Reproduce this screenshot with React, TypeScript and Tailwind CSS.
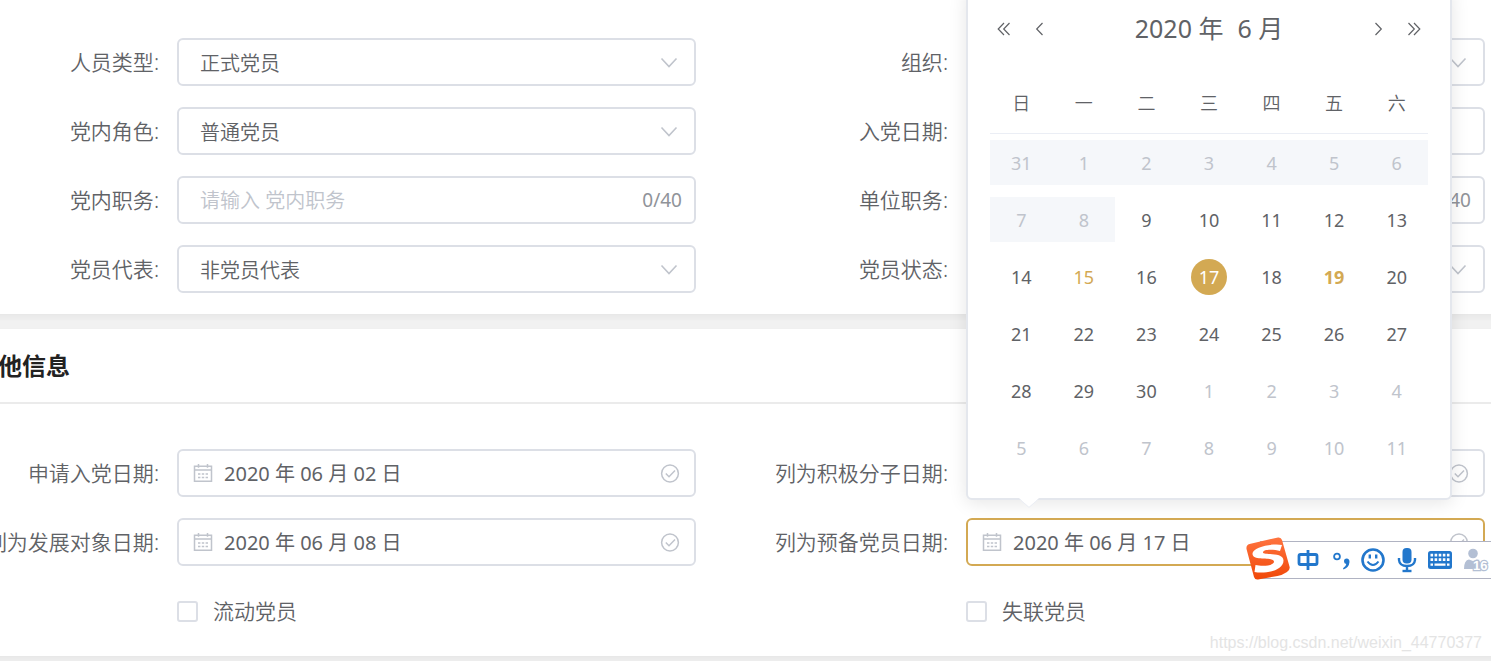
import { useState } from "react"

interface IField {
  id: string
  label: string
  type: 'select' | 'text' | 'date'
  value?: string
  placeholder?: string
  suffix?: 'count' | 'check'
  active?: boolean
}

const memberFields: IField[] = [
  { id: 'personType', label: '人员类型', type: 'select', value: '正式党员' },
  { id: 'organization', label: '组织', type: 'select', value: '' },
  { id: 'role', label: '党内角色', type: 'select', value: '普通党员' },
  { id: 'joinDate', label: '入党日期', type: 'date', value: '' },
  { id: 'partyDuty', label: '党内职务', type: 'text', placeholder: '请输入 党内职务', suffix: 'count' },
  { id: 'unitDuty', label: '单位职务', type: 'text', suffix: 'count' },
  { id: 'delegate', label: '党员代表', type: 'select', value: '非党员代表' },
  { id: 'status', label: '党员状态', type: 'select', value: '' },
]

const otherFields: IField[] = [
  { id: 'applyDate', label: '申请入党日期', type: 'date', value: '2020 年 06 月 02 日', suffix: 'check' },
  { id: 'activistDate', label: '列为积极分子日期', type: 'date', value: '', suffix: 'check' },
  { id: 'developDate', label: '列为发展对象日期', type: 'date', value: '2020 年 06 月 08 日', suffix: 'check' },
  { id: 'probationDate', label: '列为预备党员日期', type: 'date', value: '2020 年 06 月 17 日', suffix: 'check', active: true },
]

const weekDays = ['日', '一', '二', '三', '四', '五', '六']

const weeks = [
  [31, 1, 2, 3, 4, 5, 6],
  [7, 8, 9, 10, 11, 12, 13],
  [14, 15, 16, 17, 18, 19, 20],
  [21, 22, 23, 24, 25, 26, 27],
  [28, 29, 30, 1, 2, 3, 4],
  [5, 6, 7, 8, 9, 10, 11],
]

const ChevronDown = () => (
  <svg width="18" height="12" viewBox="0 0 18 12" fill="none" stroke="#c0c4cc" strokeWidth="1.6" className="pointer-events-none">
    <path d="M1.5 2.500 9 10.500 16.5 2.500" />
  </svg>
)

const CheckCircle = () => (
  <svg width="20" height="20" viewBox="0 0 20 20" fill="none" stroke="#c0c4cc" strokeWidth="1.5">
    <circle cx="10" cy="10.500" r="8.4" />
    <path d="M5.8 10.500 9 13.700 15 7.500" />
  </svg>
)

const CalendarIcon = () => (
  <svg width="20" height="20" viewBox="0 0 20 20" fill="none" stroke="#c0c4cc" strokeWidth="1.5">
    <path d="M1.5 3.2H18.5V18.2H1.5ZM1.5 7H18.5M5.5 1V4.8M14.5 1V4.8" />
    <path d="M5 11H7.4M8.8 11H11.2M12.6 11H15M5 14.500H7.4M8.8 14.500H11.2M12.6 14.500H15" />
  </svg>
)

function Arrow({ label, d }: { label: string, d: string }) {
  return (
    <button type="button" aria-label={label} className="flex items-center justify-center w-[18px] h-[18px]">
      <svg width="18" height="18" viewBox="0 0 18 18" fill="none" stroke="#606266" strokeWidth="1.2">
        <path d={d} />
      </svg>
    </button>
  )
}

function DayCell({ day, week }: { day: number, week: number }) {
  const disabled = week === 0 || (week === 1 && day < 9)
  const nextMonth = (week === 4 && day < 10) || week === 5
  let style = 'text-[#606266]'
  if (disabled) style = 'text-[#c0c4cc] bg-[#f5f7fa]'
  if (nextMonth) style = 'text-[#c0c4cc]'
  if (week === 2 && day === 15) style = 'text-[#d3a953]'
  if (week === 2 && day === 19) style = 'text-[#d3a953] font-bold'
  if (week === 2 && day === 17) style = 'text-white'
  return (
    <td className="p-0 py-[6px]">
      <button type="button" disabled={disabled} className={`flex items-center justify-center w-full h-[45px] ${style}`}>
        <span className={`flex items-center justify-center w-9 h-9 rounded-full ${style === 'text-white' ? 'bg-[#d3a953]' : ''}`}>{day}</span>
      </button>
    </td>
  )
}

function DatePanel() {
  return (
    <div className="absolute z-10 left-0 bottom-full mb-[18px] w-[486px] px-[22px] pt-[18px] pb-[22px] bg-white border-2 border-[#e4e7ed] rounded-md shadow-[0_3px_18px_rgba(0,0,0,0.1)] text-[#606266]">
      <div className="flex items-center h-[45px] mb-[22px] px-[5px]">
        <div className="flex gap-[18px]">
          <Arrow label="前一年" d="M9 3 3.2 9 9 15M14.5 3 8.7 9 14.5 15" />
          <Arrow label="上个月" d="M11.5 3 5.7 9 11.5 15" />
        </div>
        <div className="flex-1 flex justify-center gap-[14px] text-[25px]">
          <button type="button">2020 年</button>
          <button type="button">6 月</button>
        </div>
        <div className="flex gap-[18px]">
          <Arrow label="下个月" d="M6.5 3 12.3 9 6.5 15" />
          <Arrow label="后一年" d="M3.5 3 9.3 9 3.5 15M9 3 14.8 9 9 15" />
        </div>
      </div>
      <table className="w-full table-fixed border-collapse text-lg leading-6 text-center">
        <thead>
          <tr className="h-[60px] border-b border-[#ebeef5]">
            {weekDays.map(name => <th key={name} className="p-0 font-[350]">{name}</th>)}
          </tr>
        </thead>
        <tbody>
          {
            weeks.map((days, week) => (
              <tr key={week}>
                {days.map(day => <DayCell key={day} day={day} week={week} />)}
              </tr>
            ))
          }
        </tbody>
      </table>
      <svg width="20" height="10" viewBox="0 0 20 10" className="absolute left-[51px] top-full">
        <path d="M0 0H20L10 9Z" fill="#fff" />
        <path d="M1.5 2 10 9.4 18.5 2" fill="none" stroke="#ebeef5" />
      </svg>
    </div>
  )
}

function Field({ field }: { field: IField }) {
  const [value, setValue] = useState(field.value ?? '')
  const border = field.active ? 'border-[#d3a953]' : 'border-[#dcdfe6]'
  return (
    <>
      <div className="flex justify-end pr-[18px]">
        <label htmlFor={field.id} className="shrink-0 whitespace-nowrap text-[21px] leading-[48px] font-[350]">{field.label}:</label>
      </div>
      <div className="relative min-w-0">
        <div className={`flex items-center h-12 bg-white border-2 rounded-md ${border}`}>
          {
            field.type === 'select' &&
            <>
              <select id={field.id} value={value} onChange={(e) => setValue(e.target.value)} className="appearance-none w-full h-full pt-[3px] pl-[21px] -mr-[34px] text-xl font-[350] outline-none">
                <option>{field.value}</option>
              </select>
              <span className="shrink-0 mr-[15px]"><ChevronDown /></span>
            </>
          }
          {
            field.type === 'date' &&
            <>
              <span className="shrink-0 ml-[14px] mr-[11px]"><CalendarIcon /></span>
              <input id={field.id} value={value} onChange={(e) => setValue(e.target.value)} className="flex-1 min-w-0 h-full pb-[2px] text-xl outline-none" />
            </>
          }
          {
            field.type === 'text' &&
            <input id={field.id} value={value} placeholder={field.placeholder} onChange={(e) => setValue(e.target.value)} className="flex-1 min-w-0 h-full pt-px pl-[21px] text-xl font-[350] outline-none placeholder:text-[#c0c4cc]" />
          }
          {field.suffix === 'count' && <span className="mr-3 text-[19px] text-[#909399]">{value.length}/40</span>}
          {field.suffix === 'check' && <span className="shrink-0 mr-[14px]"><CheckCircle /></span>}
        </div>
        {field.active && <DatePanel />}
      </div>
    </>
  )
}

function CheckField({ id, label }: { id: string, label: string }) {
  return (
    <div className="flex items-center h-[49px]">
      <input id={id} type="checkbox" className="appearance-none w-[21px] h-[21px] bg-white border-2 border-[#dcdfe6] rounded-[3px] checked:bg-[#d3a953]" />
      <label htmlFor={id} className="pl-[15px] text-[21px] font-[350]">{label}</label>
    </div>
  )
}

function InputMethodBar() {
  return (
    <div className="absolute z-20 right-0 top-[541px] w-[231px] h-[38px] flex items-center bg-white border-y border-[#b0b3c2] text-[#2277cc]">
      <svg width="46" height="46" viewBox="0 0 46 46" className="shrink-0 -ml-[15px]">
        <defs>
          <linearGradient id="logo" x1="0" y1="0" x2="0" y2="1">
            <stop offset="0" stopColor="#ff7440" />
            <stop offset="1" stopColor="#f04808" />
          </linearGradient>
        </defs>
        <path d="M4.500 7 33 .5Q36 0 37 3L44.500 29.500Q45.500 32.500 42 35Q37.500 38 32.500 39L13 42.500Q10 43 9 40L1.500 12Q1 8 4.500 7Z" fill="url(#logo)" />
        <path d="M37 8C29 6 7 9.500 7.500 17C8 24.500 29 19.500 29 24.500C29 29 17 29.500 10.500 28L9.500 35C20 37 38.500 34 38.500 23.500C38.500 14.500 18 18.500 18 15.500C18 12 29 12.500 35 14Z" fill="#fff" />
      </svg>
      <svg width="22" height="22" viewBox="0 0 22 22" fill="none" stroke="currentColor" strokeWidth="2.800" className="shrink-0 ml-[6px]">
        <rect x="2" y="5.500" width="18" height="10" rx="1.500" />
        <path d="M11 1V21" />
      </svg>
      <svg width="20" height="20" viewBox="0 0 20 20" className="shrink-0 ml-[13px]">
        <circle cx="5" cy="6.500" r="2.900" fill="none" stroke="currentColor" strokeWidth="1.800" />
        <path d="M12 11.300Q12 8.500 14.700 8.500Q17.500 8.800 17.500 12Q17 17.500 11.500 19.500L11 18.300Q14 16.500 14.300 14Q12 13.800 12 11.300Z" fill="currentColor" />
      </svg>
      <svg width="24" height="24" viewBox="0 0 24 24" fill="none" stroke="currentColor" className="shrink-0 ml-[9px]">
        <circle cx="12" cy="12" r="10.500" strokeWidth="2.600" />
        <path d="M8.800 6.500V10.500M15.200 6.500V10.500" strokeWidth="2.400" />
        <path d="M6.500 13.500Q12 20.500 17.500 13.500" strokeWidth="2" />
      </svg>
      <svg width="20" height="26" viewBox="0 0 20 26" fill="none" stroke="currentColor" className="shrink-0 ml-3">
        <rect x="5.500" y="1" width="9" height="15.500" rx="4" fill="currentColor" stroke="none" />
        <path d="M2 11V13Q2.500 19 10 19Q17.500 19 18 13V11M10 19V24" strokeWidth="2.400" />
        <path d="M5.500 24H14.500" strokeWidth="2.400" />
      </svg>
      <svg width="26" height="20" viewBox="0 0 26 20" className="shrink-0 ml-[10px]">
        <rect x="1" y="1" width="24" height="18" rx="2.500" fill="currentColor" />
        <path d="M3.500 5.200H22.500M3.500 9.700H22.500" stroke="#fff" strokeWidth="2.800" strokeDasharray="2.600 1.500" fill="none" />
        <path d="M3.500 14.700H6M7.500 14.700H18.500M20 14.700H22.500" stroke="#fff" strokeWidth="2.200" />
      </svg>
      <svg width="28" height="24" viewBox="0 0 28 24" fill="#b3bfd4" className="shrink-0 ml-[10px]">
        <circle cx="10" cy="5.500" r="4.800" />
        <path d="M1 21Q1 12 6 11.500L10 13L14 11.500Q18 12 19 21Z" />
        <text x="10" y="22" fontSize="13" fontWeight="700" fill="#fff" stroke="#b3bfd4" strokeWidth="2.400" paintOrder="stroke" className="font-['Liberation_Sans',sans-serif]">16</text>
      </svg>
    </div>
  )
}

export default function App() {
  return (
    <div className="relative overflow-hidden min-h-screen bg-[#f5f5f5] text-[#606266] font-['Noto_Sans','Noto_Sans_CJK_SC',sans-serif]">
      <main className="-ml-[30px] -mr-5">
        <section className="bg-white pt-[38px] pb-[21px] pr-[26px] shadow-[0_3px_12px_rgba(0,0,0,0.08)]">
          <form className="grid grid-cols-[207px_1fr_270px_1fr] gap-y-[21px]">
            {memberFields.map(field => <Field key={field.id} field={field} />)}
          </form>
        </section>
        <section className="mt-[15px] bg-white pb-5 shadow-[0_3px_12px_rgba(0,0,0,0.08)]">
          <div className="flex items-center h-[75px] pl-1 border-b-2 border-[#ebebeb]">
            <h2 className="text-2xl font-bold text-[#222]">其他信息</h2>
          </div>
          <form className="grid grid-cols-[207px_1fr_270px_1fr] gap-y-[21px] pt-[45px] pr-[26px]">
            {otherFields.map(field => <Field key={field.id} field={field} />)}
            <div className="col-start-2"><CheckField id="floating" label="流动党员" /></div>
            <div className="col-start-4"><CheckField id="lost" label="失联党员" /></div>
          </form>
        </section>
      </main>
      <p className="absolute right-[9px] top-[631px] text-base leading-6 text-[#e4e4e4] font-['Liberation_Sans',sans-serif]">https://blog.csdn.net/weixin_44770377</p>
      <InputMethodBar />
    </div>
  )
}
